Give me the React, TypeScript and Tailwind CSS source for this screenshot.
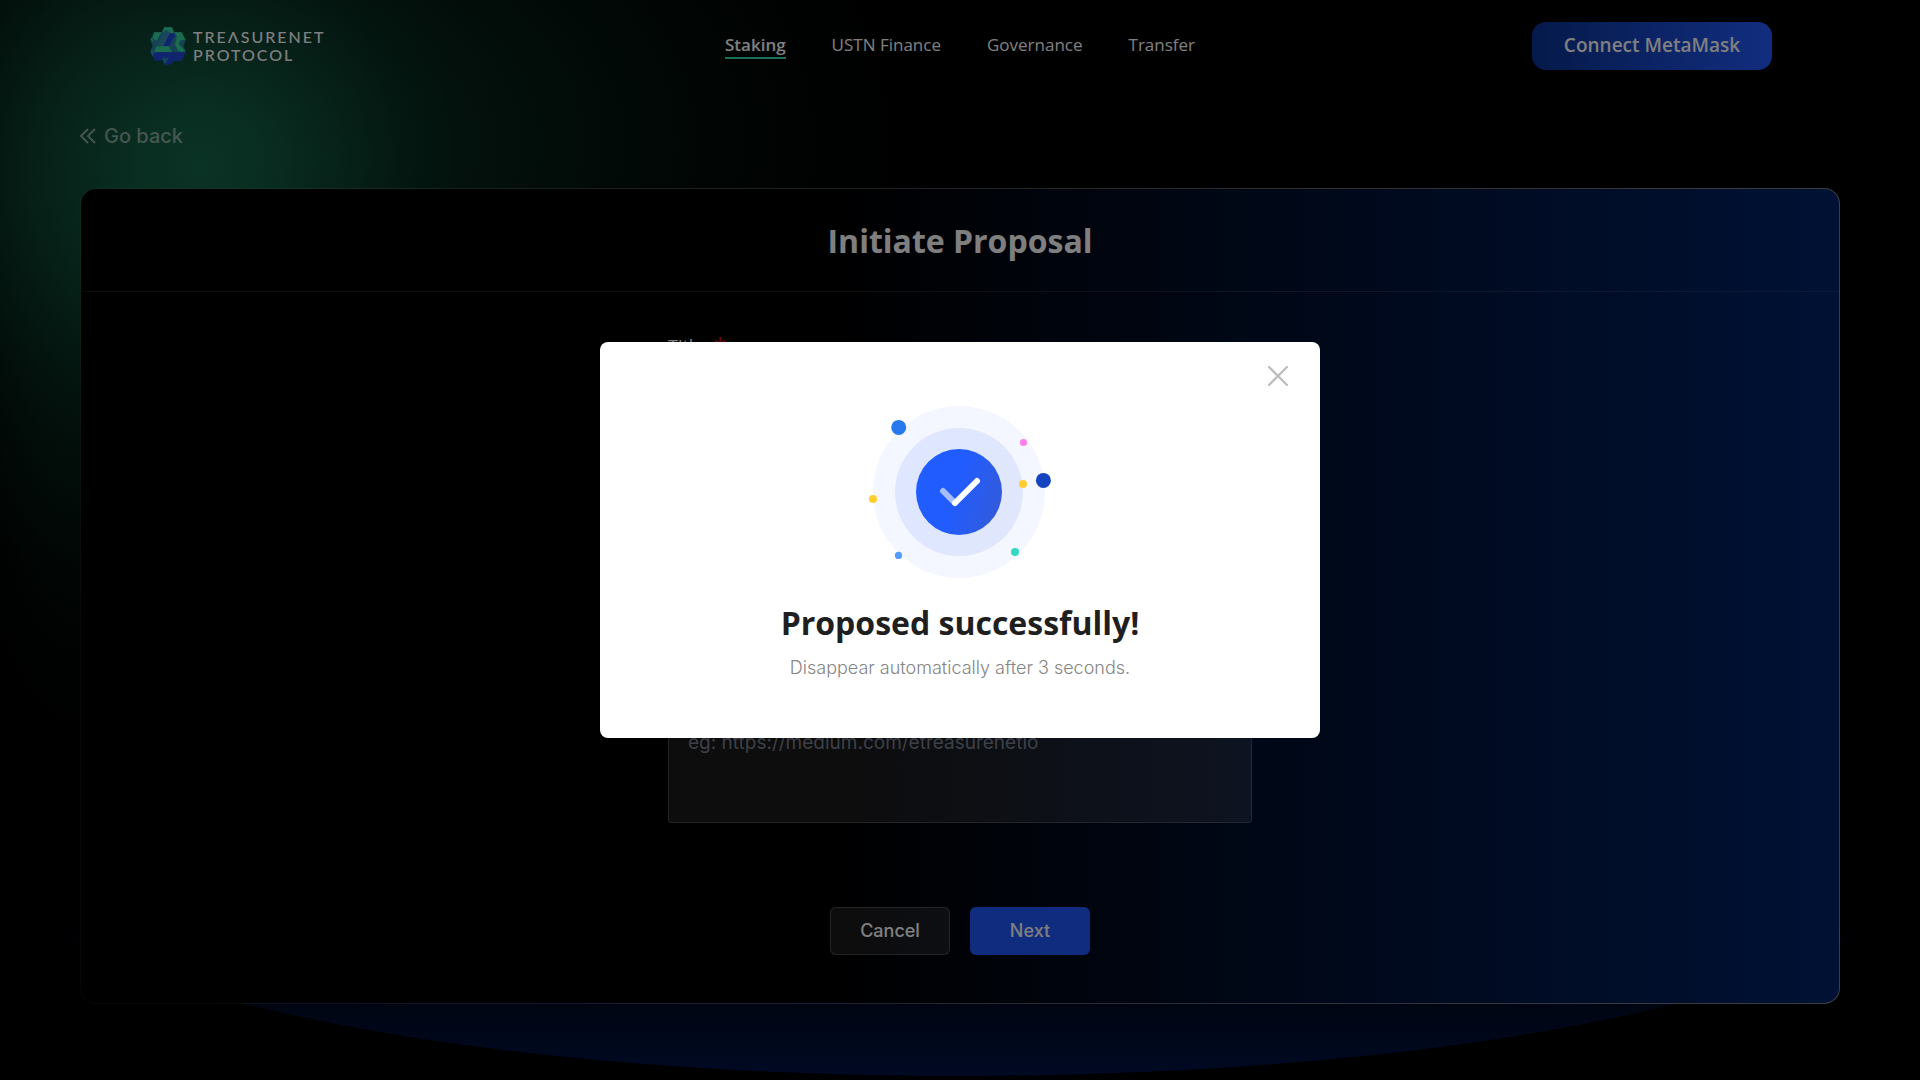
import React from "react";

const NAV = ["Staking", "USTN Finance", "Governance", "Transfer"];

function LogoMark() {
  return (
    <svg viewBox="60 51 108 114" className="h-[38px] w-9" aria-hidden="true">
      <path d="M103 52h23l6 15h23l12 24-7 17 7 17-13 27h-23l-9 11h-19l-5-13H75L61 126l7-18-7-18 11-23h23z" fill="#2a86aa" />
      <path d="M103 52h23l6 15-8 5-14-12-14 8z" fill="#36d89c" />
      <path d="M72 67h22l-14 26-12-8zM61 88l5-3 6 12z" fill="#36d89c" />
      <path d="M108 60l15 11-20 38H80z" fill="#3391b8" />
      <path d="M119 70h14l2 6-18 32h-17z" fill="#2148e0" />
      <path d="M132 67h23l12 23h-14l-7 12 21 21-14 4-14-8-8-22 10-18z" fill="#36d89c" />
      <path d="M136 78l-18 34 12 16h18l-14-26 6-14z" fill="#2a86aa" />
      <path d="M80 109h36l10 17H71z" fill="#36d89c" />
      <path d="M71 127h54l-9 16H99l-4 9H75L61 127z" fill="#2148e0" />
      <path d="M61 125l6-14 8 16-7 12z" fill="#2f8fb4" />
      <path d="M126 127l14 0 27-2-13 27h-23l-9 11h-19l12-18z" fill="#2148e0" />
      <path d="M99 145h15l-9 17z" fill="#2f8fb4" />
    </svg>
  );
}

function Header() {
  return (
    <header className="flex h-[92px] items-center justify-between px-[148px]">
      <a href="#" className="flex w-60 items-center gap-[7px] pl-0.5 font-[Lato,sans-serif]">
        <LogoMark />
        <span className="flex flex-col text-base leading-[18px] font-medium tracking-[2px] text-white">
          <span>TREΛSURENET</span>
          <span>PROTOCOL</span>
        </span>
      </a>
      <nav className="flex items-center gap-[46px] text-[17px] leading-6 text-white">
        {NAV.map((item, i) => (
          <a
            key={item}
            href="#"
            className={
              i === 0
                ? "border-b-2 border-[#34e0b0] font-semibold"
                : "border-b-2 border-transparent"
            }
          >
            {item}
          </a>
        ))}
      </nav>
      <button className="h-12 w-60 rounded-[14px] bg-linear-to-r/srgb from-[#0a3494] to-[#245bff] pb-0.5 text-[19px] font-semibold text-white">
        Connect MetaMask
      </button>
    </header>
  );
}

function ProposalCard() {
  return (
    <section className="rounded-2xl bg-linear-to-r/srgb from-white/5 to-white/50 p-px">
      <div className="rounded-[15px] bg-linear-to-r/srgb from-black from-42% to-[#002369]">
        <h1 className="border-b border-white/10 pt-8 pb-[30px] text-center text-[32px] leading-10 font-bold text-white">
          Initiate Proposal
        </h1>
        <form className="mx-auto flex w-[584px] flex-col pt-10 pb-12">
          <label htmlFor="title" className="flex h-7 gap-2.5 text-lg leading-7 text-white">
            Title <span className="text-2xl leading-7 text-red-600">*</span>
          </label>
          <input
            id="title"
            className="mt-3 h-12 rounded border border-white/20 bg-white/10 px-5 text-white"
          />
          <textarea
            aria-label="Proposal link"
            placeholder="eg: https://medium.com/etreasurenetio"
            className="mt-[279px] h-[124px] resize-none rounded border border-white/20 bg-white/10 px-[19px] py-[29px] font-[Inter,sans-serif] text-[19px] leading-7 text-white placeholder:text-[#7b808e]"
          />
          <div className="mt-[84px] flex justify-center gap-5 font-[Inter,sans-serif] text-lg font-medium text-white">
            <button type="button" className="h-12 w-30 rounded-md border border-white/20 bg-white/10">
              Cancel
            </button>
            <button type="button" className="h-12 w-30 rounded-md bg-[#2058ff]">
              Next
            </button>
          </div>
        </form>
      </div>
    </section>
  );
}

function SuccessArt() {
  return (
    <svg viewBox="867 406 186 172" className="h-[172px] w-[186px]" aria-hidden="true">
      <defs>
        <linearGradient id="disc" x1="0" y1="0.35" x2="1" y2="0.65">
          <stop offset="0.45" stopColor="#215cff" />
          <stop offset="1" stopColor="#335bdb" />
        </linearGradient>
      </defs>
      <circle cx="959" cy="492" r="86" fill="#f4f7ff" />
      <circle cx="959" cy="492" r="64" fill="url(#disc)" fillOpacity="0.1" />
      <circle cx="959" cy="492" r="43" fill="url(#disc)" />
      <path d="M943 491l12 12" stroke="#a6bdff" strokeWidth="6" strokeLinecap="round" />
      <path d="M955 503l22-22" stroke="#fff" strokeWidth="6" strokeLinecap="round" />
      <circle cx="898.7" cy="427.4" r="7.5" fill="#2878f0" />
      <circle cx="1023.4" cy="442.5" r="3.6" fill="#ff80ec" />
      <circle cx="1023" cy="484" r="4" fill="#ffcd2e" />
      <circle cx="1043.4" cy="480.4" r="7.5" fill="#1643c0" />
      <circle cx="873" cy="499" r="4" fill="#ffcd2e" />
      <circle cx="898.5" cy="555.4" r="3.6" fill="#559cff" />
      <circle cx="1015" cy="552" r="4" fill="#34d9c3" />
    </svg>
  );
}

function SuccessDialog() {
  return (
    <div className="fixed inset-0 flex items-center justify-center bg-black/50">
      <div
        role="dialog"
        aria-modal="true"
        aria-labelledby="done"
        className="relative flex w-[720px] flex-col items-center rounded-lg bg-white pt-16 pb-[57px]"
      >
        <button aria-label="Close" className="absolute top-6 right-8">
          <svg viewBox="0 0 20 20" className="size-5" stroke="#bfbfbf" strokeWidth="2.4" strokeLinecap="round">
            <path d="M1 1l18 18M19 1L1 19" />
          </svg>
        </button>
        <SuccessArt />
        <h2 id="done" className="mt-[25px] text-[32px] leading-10 font-bold text-[#1f1f1f]">
          Proposed successfully!
        </h2>
        <p className="mt-3 font-[Inter,sans-serif] text-lg leading-[26px] font-light text-[#858585]">
          Disappear automatically after 3 seconds.
        </p>
      </div>
    </div>
  );
}

export default function App() {
  return (
    <div className="relative min-h-screen overflow-hidden bg-black font-[Open_Sans,sans-serif]">
      <div className="absolute inset-0 bg-[radial-gradient(circle_300px_at_200px_165px,#187052d9_0,#166a4ec0_20%,#13604680_45%,#0f503a38_70%,#0c40300f_88%,transparent),radial-gradient(ellipse_130px_460px_at_75px_290px,#0f503a60_0,#0f503a40_40%,#0f503a14_75%,transparent),radial-gradient(ellipse_680px_440px_at_240px_140px,#0c4030c0_0,#0c403078_40%,#0c403028_72%,transparent)]" />
      <div className="absolute inset-x-0 bottom-[5px] h-[434px] rounded-[50%] bg-linear-to-b/srgb from-transparent from-65% to-[#001447]" />
      <div className="relative">
        <Header />
        <main className="px-20 pb-[77px]">
          <a href="#" className="mt-[30px] mb-[38px] flex items-center gap-2 font-[Inter,sans-serif] text-xl leading-7 font-medium text-white/50">
            <svg viewBox="0 0 16 16" className="size-4" fill="none" stroke="currentColor" strokeWidth="2">
              <path d="M8 1L1 8l7 7M15 1L8 8l7 7" />
            </svg>
            Go back
          </a>
          <ProposalCard />
        </main>
      </div>
      <SuccessDialog />
    </div>
  );
}
